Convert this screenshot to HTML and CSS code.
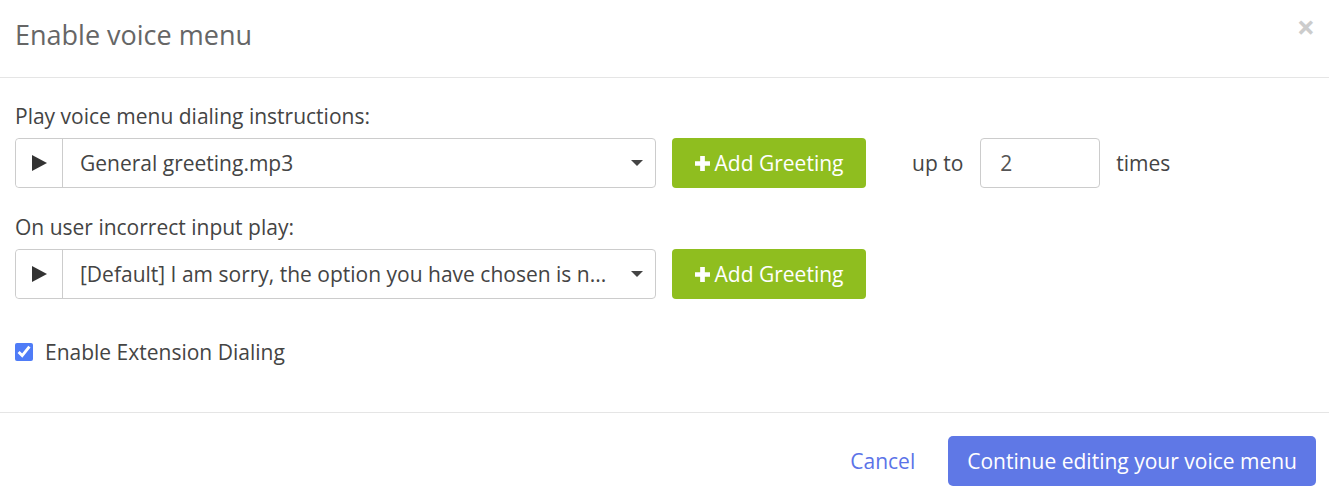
FILE: index.html
```html
<!DOCTYPE html>
<html lang="en">
<head>
    <meta charset="UTF-8">
    <title>Enable voice menu</title>
    <link rel="stylesheet" href="styles.css">
</head>
<body>
    <div class="modal">
        <div class="modal-header">
            <h2>Enable voice menu</h2>
            <span class="close">&times;</span>
        </div>

        <div class="modal-body">
            <!-- dialing instructions -->
            <label class="field-label">Play voice menu dialing instructions:</label>
            <div class="row">
                <div class="audio-select">
                    <button class="play" type="button">
                        <svg width="16" height="16" viewBox="0 0 16 16"><path d="M1 0 L16 8 L1 16 Z" fill="#333"/></svg>
                    </button>
                    <div class="select">
                        <span class="select-text">General greeting.mp3</span>
                        <span class="caret"></span>
                    </div>
                </div>
                <button class="btn-green" type="button">
                    <svg class="plus" width="16" height="16" viewBox="0 0 16 16"><path d="M5.5 0h5v5.5H16v5h-5.5V16h-5v-5.5H0v-5h5.5z" fill="#fff"/></svg>
                    Add Greeting
                </button>
                <span class="repeat">up to</span>
                <input class="times-input" type="text" value="2">
                <span class="times">times</span>
            </div>

            <!-- incorrect input -->
            <label class="field-label">On user incorrect input play:</label>
            <div class="row">
                <div class="audio-select">
                    <button class="play" type="button">
                        <svg width="16" height="16" viewBox="0 0 16 16"><path d="M1 0 L16 8 L1 16 Z" fill="#333"/></svg>
                    </button>
                    <div class="select">
                        <span class="select-text">[Default] I am sorry, the option you have chosen is n...</span>
                        <span class="caret"></span>
                    </div>
                </div>
                <button class="btn-green" type="button">
                    <svg class="plus" width="16" height="16" viewBox="0 0 16 16"><path d="M5.5 0h5v5.5H16v5h-5.5V16h-5v-5.5H0v-5h5.5z" fill="#fff"/></svg>
                    Add Greeting
                </button>
            </div>

            <label class="check">
                <input type="checkbox" checked>
                Enable Extension Dialing
            </label>
        </div>

        <div class="modal-footer">
            <a class="cancel" href="#">Cancel</a>
            <button class="btn-blue" type="button">Continue editing your voice menu</button>
        </div>
    </div>
</body>
</html>
```

FILE: styles.css
```css
body {
    margin: 0;
    font-family: "Open Sans", Arial, sans-serif;
    font-size: 21px;
    color: #444;
    background: #fff;
}
.modal-header {
    height: 77px;
    border-bottom: 1px solid #e5e5e5;
    display: flex;
    align-items: center;
    justify-content: space-between;
    padding: 0 15px;
}
.modal-header h2 {
    margin: 0;
    font-size: 27px;
    font-weight: normal;
    color: #666;
    margin-top: -9px;
}
.close {
    font-size: 32px;
    line-height: 32px;
    font-weight: bold;
    color: #ccc;
    margin-top: -24px;
    margin-right: -1px;
}
.modal-body {
    padding: 25px 15px 47px;
}
.field-label {
    display: block;
    color: #444;
    margin-bottom: 9px;
    line-height: 26px;
}
.row {
    display: flex;
    align-items: center;
    margin-bottom: 26px;
}
.audio-select {
    display: flex;
    width: 641px;
    height: 50px;
    border: 1px solid #ccc;
    border-radius: 4px;
    box-sizing: border-box;
}
.play {
    width: 47px;
    border: none;
    border-right: 1px solid #ccc;
    background: #fff;
    border-radius: 4px 0 0 4px;
    display: flex;
    align-items: center;
    justify-content: center;
    padding: 0;
}
.select {
    flex: 1;
    display: flex;
    align-items: center;
    padding: 0 12px 0 17px;
}
.select-text {
    flex: 1;
    color: #444;
    white-space: nowrap;
    overflow: hidden;
}
.caret {
    width: 0;
    height: 0;
    border-left: 6px solid transparent;
    border-right: 6px solid transparent;
    border-top: 6px solid #444;
}
.btn-green {
    margin-left: 16px;
    height: 50px;
    width: 194px;
    border: none;
    border-radius: 4px;
    background: #8fbe1f;
    color: #fff;
    font-family: inherit;
    font-size: 21px;
    padding: 0;
    display: flex;
    align-items: center;
    justify-content: center;
    gap: 5px;
}
.plus {
    width: 15px;
    height: 15px;
    margin-top: 1px;
}
.repeat {
    margin-left: 46px;
    margin-right: 17px;
}
.times-input {
    width: 120px;
    height: 50px;
    box-sizing: border-box;
    border: 1px solid #ccc;
    border-radius: 4px;
    padding: 0 19px;
    font-family: inherit;
    font-size: 21px;
    color: #555;
}
.times {
    margin-left: 16px;
}
.check {
    display: flex;
    align-items: center;
    line-height: 26px;
    margin-top: 40px;
}
.check input {
    width: 18px;
    height: 18px;
    margin: 0 12px 0 0;
    accent-color: #4f7cf7;
}
.modal-footer {
    border-top: 1px solid #e5e5e5;
    display: flex;
    justify-content: flex-end;
    align-items: center;
    padding: 23px 13px 12px;
}
.cancel {
    color: #5b73e8;
    text-decoration: none;
    font-size: 21px;
    margin-right: 33px;
}
.btn-blue {
    height: 50px;
    padding: 0 19px;
    border: none;
    border-radius: 5px;
    background: #5f78e6;
    color: #fff;
    font-family: inherit;
    font-size: 21px;
}
```
